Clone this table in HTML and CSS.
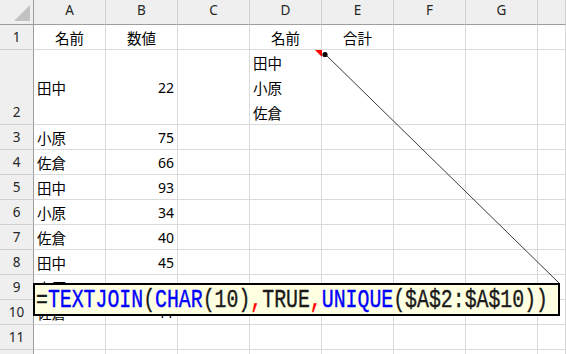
FILE: index.html
```html
<!DOCTYPE html>
<html lang="ja">
<head>
<meta charset="utf-8">
<title>Sheet</title>
<link rel="stylesheet" href="styles.css">
</head>
<body>
<div class="sheet">
  <div class="grid">
    <div class="corner"><svg class="corner-tri" width="34" height="25" viewBox="0 0 34 25"><polygon points="30,5 30,21 14,21" fill="#c2c2c2"/></svg></div>
    <div class="ch">A</div><div class="ch">B</div><div class="ch">C</div><div class="ch">D</div><div class="ch">E</div><div class="ch">F</div><div class="ch">G</div><div class="ch"></div>

    <div class="rh">1</div><div class="c ctr">名前</div><div class="c ctr">数値</div><div class="c"></div><div class="c ctr">名前</div><div class="c ctr">合計</div><div class="c"></div><div class="c"></div><div class="c"></div>

    <div class="rh rh-bottom">2</div><div class="c">田中</div><div class="c num">22</div><div class="c"></div><div class="c wrap">田中<br>小原<br>佐倉<span class="flag"></span></div><div class="c"></div><div class="c"></div><div class="c"></div><div class="c"></div>

    <div class="rh">3</div><div class="c">小原</div><div class="c num">75</div><div class="c"></div><div class="c"></div><div class="c"></div><div class="c"></div><div class="c"></div><div class="c"></div>
    <div class="rh">4</div><div class="c">佐倉</div><div class="c num">66</div><div class="c"></div><div class="c"></div><div class="c"></div><div class="c"></div><div class="c"></div><div class="c"></div>
    <div class="rh">5</div><div class="c">田中</div><div class="c num">93</div><div class="c"></div><div class="c"></div><div class="c"></div><div class="c"></div><div class="c"></div><div class="c"></div>
    <div class="rh">6</div><div class="c">小原</div><div class="c num">34</div><div class="c"></div><div class="c"></div><div class="c"></div><div class="c"></div><div class="c"></div><div class="c"></div>
    <div class="rh">7</div><div class="c">佐倉</div><div class="c num">40</div><div class="c"></div><div class="c"></div><div class="c"></div><div class="c"></div><div class="c"></div><div class="c"></div>
    <div class="rh">8</div><div class="c">田中</div><div class="c num">45</div><div class="c"></div><div class="c"></div><div class="c"></div><div class="c"></div><div class="c"></div><div class="c"></div>
    <div class="rh">9</div><div class="c">小原</div><div class="c num">31</div><div class="c"></div><div class="c"></div><div class="c"></div><div class="c"></div><div class="c"></div><div class="c"></div>
    <div class="rh">10</div><div class="c">佐倉</div><div class="c num">11</div><div class="c"></div><div class="c"></div><div class="c"></div><div class="c"></div><div class="c"></div><div class="c"></div>
    <div class="rh">11</div><div class="c"></div><div class="c"></div><div class="c"></div><div class="c"></div><div class="c"></div><div class="c"></div><div class="c"></div><div class="c"></div>
    <div class="rh"></div><div class="c"></div><div class="c"></div><div class="c"></div><div class="c"></div><div class="c"></div><div class="c"></div><div class="c"></div><div class="c"></div>
  </div>

  <svg class="leader" width="566" height="354" viewBox="0 0 566 354">
    <line x1="325" y1="54" x2="559.5" y2="283.5" stroke="#3a3a3a" stroke-width="1"/>
    <circle cx="325" cy="54.5" r="2.6" fill="#000"/>
  </svg>

  <div class="note"><span class="formula">=<span class="fn">TEXTJOIN</span>(<span class="fn">CHAR</span>(10)<span class="sep">,</span>TRUE<span class="sep">,</span><span class="fn">UNIQUE</span>($A$2:$A$10))</span></div>
</div>
</body>
</html>
```

FILE: styles.css
```css
html, body {
  margin: 0;
  padding: 0;
  background: #ffffff;
  overflow: hidden;
}

.sheet {
  position: relative;
  width: 566px;
  height: 354px;
  overflow: hidden;
  font-family: "Noto Sans CJK JP", "Noto Sans", sans-serif;
  color: #000;
}

.grid {
  display: grid;
  grid-template-columns: 34px repeat(7, 72px) 1fr;
  grid-template-rows: 25px 25px 75px repeat(10, 25px);
}

.grid > div {
  box-sizing: border-box;
}

.corner {
  background: #efefef;
  border-right: 1px solid #9e9e9e;
  border-bottom: 1px solid #9e9e9e;
  position: relative;
}

.corner-tri {
  position: absolute;
  left: 0;
  top: 0;
}

.ch {
  background: #efefef;
  border-right: 1px solid #d0d0d0;
  border-bottom: 1px solid #9e9e9e;
  display: flex;
  align-items: center;
  justify-content: center;
  padding-bottom: 5px;
  font-family: "Noto Sans", sans-serif;
  font-size: 13.5px;
  color: #262626;
}

.rh {
  background: #efefef;
  border-right: 1px solid #9e9e9e;
  border-bottom: 1px solid #d0d0d0;
  display: flex;
  align-items: center;
  justify-content: center;
  font-family: "Noto Sans", sans-serif;
  font-size: 13.5px;
  color: #262626;
}

.rh-bottom {
  align-items: flex-end;
  line-height: 24px;
}

.c {
  border-right: 1px solid #dadada;
  border-bottom: 1px solid #dadada;
  display: flex;
  align-items: center;
  padding: 0 3px;
  font-size: 14.5px;
  white-space: nowrap;
  overflow: visible;
}

.ctr {
  justify-content: center;
}

.num {
  justify-content: flex-end;
  padding-right: 3px;
  font-family: "Noto Sans", sans-serif;
  font-size: 14px;
}

.wrap {
  display: block;
  position: relative;
  line-height: 25px;
}

.flag {
  position: absolute;
  top: 0;
  right: -1px;
  width: 0;
  height: 0;
  border-top: 7px solid #ff0000;
  border-left: 7px solid transparent;
}

.leader {
  position: absolute;
  left: 0;
  top: 0;
  pointer-events: none;
}

.note {
  position: absolute;
  left: 33px;
  top: 283px;
  width: 527px;
  height: 33px;
  box-sizing: border-box;
  border: 2px solid #000;
  background: #ffffe1;
  display: flex;
  align-items: center;
  padding-left: 1px;
  overflow: hidden;
}

.formula {
  display: inline-block;
  font-family: "Liberation Mono", monospace;
  font-size: 26px;
  line-height: 1;
  white-space: nowrap;
  color: #1a1a1a;
  -webkit-text-stroke: 0.4px currentColor;
  transform: scaleX(0.763);
  transform-origin: left center;
}

.fn {
  color: #0000ff;
}

.sep {
  color: #ff0000;
}
```
